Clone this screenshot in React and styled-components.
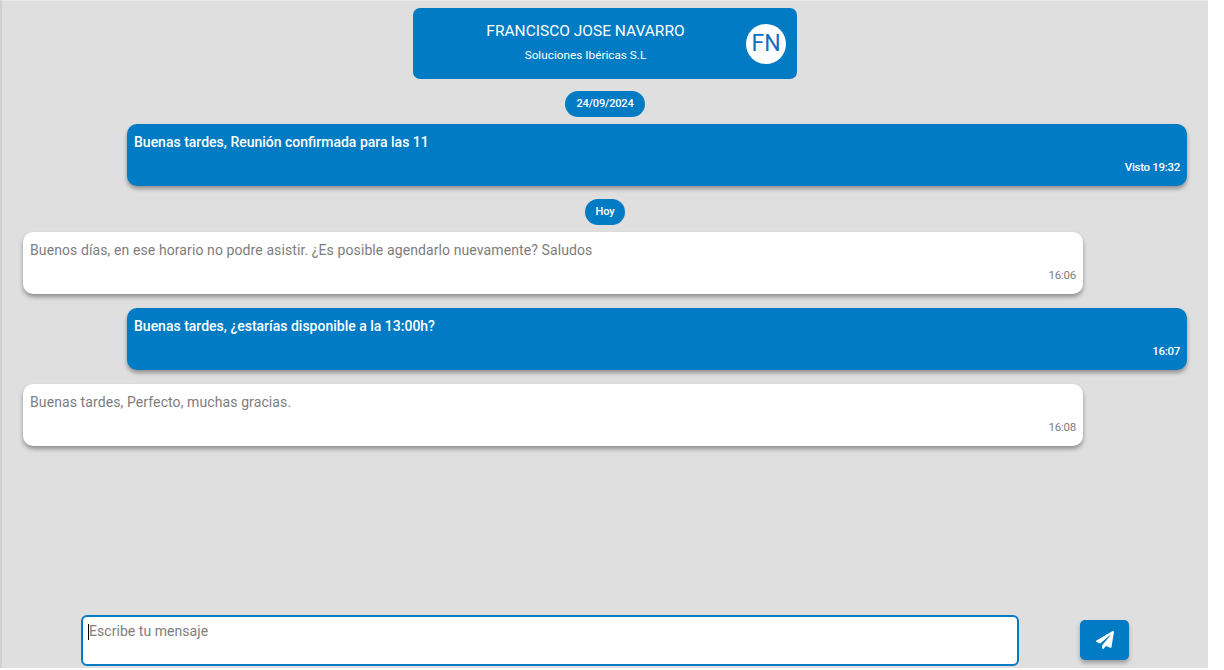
import React from "react";
import styled, { createGlobalStyle } from "styled-components";

const Global = createGlobalStyle`
  html, body { margin: 0; height: 100%; background: #fff; overflow: hidden; }
  #root { height: 100%; }
  * { box-sizing: border-box; }
`;

const Page = styled.div`
  width: 1208px;
  height: 668px;
  background: #dfdfdf;
  border-left: 2px solid #cfcfcf;
  border-top: 1px solid #e8e8e8;
  display: flex;
  flex-direction: column;
  font-family: Roboto, "Noto Sans", sans-serif;
`;
const Header = styled.div`
  align-self: center;
  margin: 7px 0 0 0;
  width: 384px;
  height: 71px;
  background: #007bc4;
  border-radius: 7px;
  color: #fff;
  display: flex;
  align-items: center;
  padding: 0 11px 0 0;
`;
const HeaderText = styled.div`
  flex: 1;
  text-align: center;
  padding-left: 12px;
  margin-top: -3px;
`;
const Name = styled.div`
  font-size: 15.5px;
  line-height: 20px;
  margin-bottom: 6px;
`;
const Company = styled.div`
  font-size: 11.8px;
  line-height: 16px;
`;
const Avatar = styled.div`
  width: 40px;
  height: 40px;
  border-radius: 50%;
  background: #fff;
  color: #0d6fc0;
  font-size: 23px;
  display: flex;
  align-items: center;
  justify-content: center;
`;
const DatePill = styled.div`
  align-self: center;
  margin-top: ${(p) => p.$top}px;
  height: 26px;
  padding: 0 11px;
  border-radius: 13px;
  background: #007bc4;
  color: #fff;
  font-size: 11px;
  font-weight: 500;
  letter-spacing: -0.15px;
  line-height: 26px;
`;
const Bubble = styled.div`
  width: 1060px;
  height: 62px;
  margin-top: ${(p) => p.$top}px;
  margin-left: ${(p) => (p.$mine ? "125px" : "21px")};
  border-radius: 10px;
  padding: 9px 7px 0;
  background: ${(p) => (p.$mine ? "#007bc4" : "#fff")};
  color: ${(p) => (p.$mine ? "#fff" : "#7d7d7d")};
  box-shadow: 0 3px 4px rgba(0, 0, 0, 0.35);
  display: flex;
  flex-direction: column;
`;
const Text = styled.div`
  font-size: 14px;
  line-height: 18px;
  font-weight: ${(p) => (p.$mine ? 500 : 400)};
  letter-spacing: ${(p) => (p.$mine ? "0" : "0.1px")};
`;
const Time = styled.div`
  margin-top: 8px;
  text-align: right;
  font-size: 11.5px;
  font-weight: ${(p) => (p.$mine ? 500 : 400)};
  letter-spacing: ${(p) => (p.$mine ? "-0.3px" : "-0.25px")};
  line-height: 16px;
`;
const Composer = styled.div`
  margin-top: auto;
  margin-bottom: 2px;
  padding-left: 79px;
  display: flex;
  align-items: flex-start;
`;
const InputBox = styled.div`
  width: 938px;
  height: 51px;
  background: #fff;
  border: 2px solid #007bc4;
  border-radius: 6px;
  padding: 5px 5px;
  display: flex;
  align-items: flex-start;
  font-size: 14px;
  line-height: 18px;
  letter-spacing: 0.05px;
  color: #7d7d7d;
`;
const Caret = styled.span`
  width: 1px;
  height: 16px;
  margin-top: 2px;
  background: #000;
`;
const SendButton = styled.button`
  width: 49px;
  height: 40px;
  margin-left: 61px;
  margin-top: 5px;
  border: none;
  border-radius: 5px;
  background: #007bc4;
  box-shadow: 0 3px 4px rgba(0, 0, 0, 0.3);
  display: flex;
  align-items: center;
  justify-content: center;
  padding: 0;
`;

const PlaneIcon = () => (
  <svg width="18" height="18" viewBox="0 0 512 512" fill="#fff">
    <path d="M476 3.2 12.5 270.6c-18.1 10.4-15.8 35.6 2.2 43.2L121 358.4l287.3-253.2c5.5-4.9 13.3 2.6 8.6 8.3L176 407v80.5c0 23.6 28.5 32.9 42.5 15.8L282 426l124.6 52.2c14.2 6 30.4-2.9 33-18.2l72-432C515 7.8 493.3-6.8 476 3.2z" />
  </svg>
);

const messages = [
  { top: 7, mine: true, text: "Buenas tardes, Reunión confirmada para las 11", time: "Visto 19:32" },
  { pill: "Hoy", top: 13 },
  { top: 7, text: "Buenos días, en ese horario no podre asistir. ¿Es posible agendarlo nuevamente? Saludos", time: "16:06" },
  { top: 14, mine: true, text: "Buenas tardes, ¿estarías disponible a la 13:00h?", time: "16:07" },
  { top: 14, text: "Buenas tardes, Perfecto, muchas gracias.", time: "16:08" },
];

export default function App() {
  return (
    <Page>
      <Global />
      <Header>
        <HeaderText>
          <Name>FRANCISCO JOSE NAVARRO</Name>
          <Company>Soluciones Ibéricas S.L</Company>
        </HeaderText>
        <Avatar>FN</Avatar>
      </Header>
      <DatePill $top={12}>24/09/2024</DatePill>
      {messages.map((m, i) =>
        m.pill ? (
          <DatePill key={i} $top={m.top}>{m.pill}</DatePill>
        ) : (
          <Bubble key={i} $mine={m.mine} $top={m.top}>
            <Text $mine={m.mine}>{m.text}</Text>
            <Time $mine={m.mine}>{m.time}</Time>
          </Bubble>
        )
      )}
      <Composer>
        <InputBox>
          <Caret />
          Escribe tu mensaje
        </InputBox>
        <SendButton aria-label="Enviar">
          <PlaneIcon />
        </SendButton>
      </Composer>
    </Page>
  );
}
